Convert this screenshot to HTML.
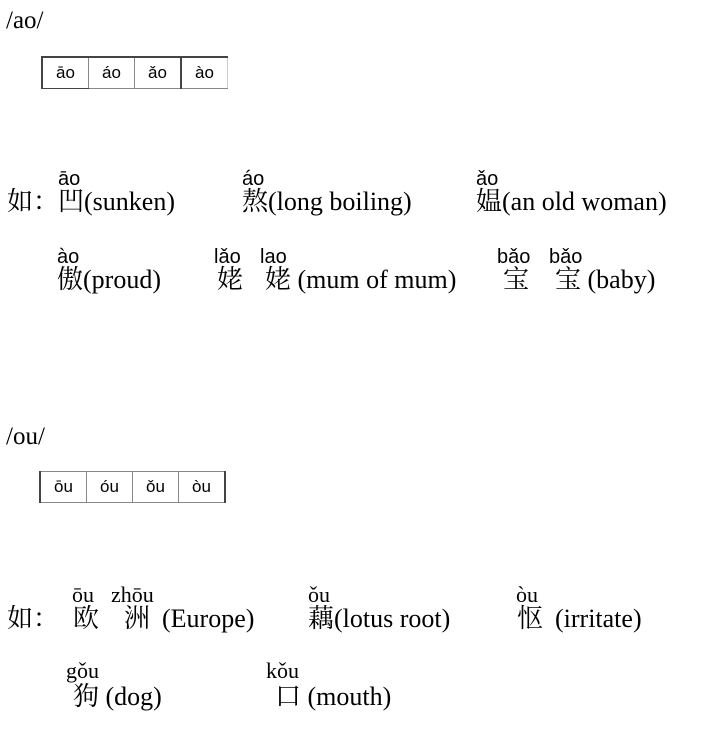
<!DOCTYPE html>
<html><head><meta charset="utf-8"><style>
body{margin:0;width:726px;height:735px;background:#fff;position:relative;overflow:hidden;color:#000}
.t{position:absolute;font-family:"Liberation Serif","Noto Serif CJK SC","Noto Sans CJK SC",serif;font-size:26px;line-height:28px;white-space:pre}
.r{position:absolute;font-family:"Liberation Sans","Noto Sans CJK SC",sans-serif;font-size:20px;line-height:20px;white-space:pre}
.rs{position:absolute;font-family:"Liberation Serif",serif;font-size:22px;line-height:20px;white-space:pre}
table{position:absolute;border-collapse:collapse;font-family:"Liberation Sans",sans-serif;font-size:17px}
td{border:1px solid #888;width:45px;height:30px;text-align:center;padding:0}
tr td:first-child{border-left:2px solid #444}
</style></head><body>
<div class="t" style="left:6px;top:7px;font-size:25px">/ao/</div>
<table style="left:41px;top:56px"><tr><td style="border-top:2px solid #444;border-bottom:1px solid #444">āo</td><td style="border-top:2px solid #444">áo</td><td style="border-top:2px solid #444;border-right:2px solid #444">ǎo</td><td style="border-top:2px solid #444;border-right:1px solid #ccc">ào</td></tr></table>

<div class="r" style="left:58px;top:169px">āo</div>
<div class="r" style="left:242px;top:169px">áo</div>
<div class="r" style="left:476px;top:169px">ǎo</div>
<div class="t" style="left:7px;top:188px">如：</div>
<div class="t" style="left:58px;top:188px">凹(sunken)</div>
<div class="t" style="left:242px;top:188px">熬(long boiling)</div>
<div class="t" style="left:476px;top:188px">媪(an old woman)</div>

<div class="r" style="left:57px;top:247px">ào</div>
<div class="r" style="left:214px;top:247px">lǎo</div>
<div class="r" style="left:260px;top:247px">lao</div>
<div class="r" style="left:497px;top:247px">bǎo</div>
<div class="r" style="left:549px;top:247px">bǎo</div>
<div class="t" style="left:57px;top:266px">傲(proud)</div>
<div class="t" style="left:217px;top:266px">姥</div>
<div class="t" style="left:265px;top:266px">姥 (mum of mum)</div>
<div class="t" style="left:503px;top:266px">宝</div>
<div class="t" style="left:555px;top:266px">宝 (baby)</div>

<div class="t" style="left:6px;top:423px;font-size:25px">/ou/</div>
<table style="left:39px;top:471px"><tr><td style="border-top:1px solid #888">ōu</td><td>óu</td><td>ǒu</td><td style="border-right:2px solid #444">òu</td></tr></table>

<div class="rs" style="left:72px;top:585px">ōu</div>
<div class="rs" style="left:111px;top:585px">zhōu</div>
<div class="rs" style="left:308px;top:585px">ǒu</div>
<div class="rs" style="left:516px;top:585px">òu</div>
<div class="t" style="left:7px;top:605px">如：</div>
<div class="t" style="left:73px;top:605px">欧</div>
<div class="t" style="left:124px;top:605px">洲</div>
<div class="t" style="left:162px;top:605px">(Europe)</div>
<div class="t" style="left:308px;top:605px">藕(lotus root)</div>
<div class="t" style="left:517px;top:605px">怄</div>
<div class="t" style="left:555px;top:605px">(irritate)</div>

<div class="rs" style="left:66px;top:661px">gǒu</div>
<div class="rs" style="left:266px;top:661px">kǒu</div>
<div class="t" style="left:73px;top:683px">狗 (dog)</div>
<div class="t" style="left:275px;top:683px">口 (mouth)</div>
</body></html>
